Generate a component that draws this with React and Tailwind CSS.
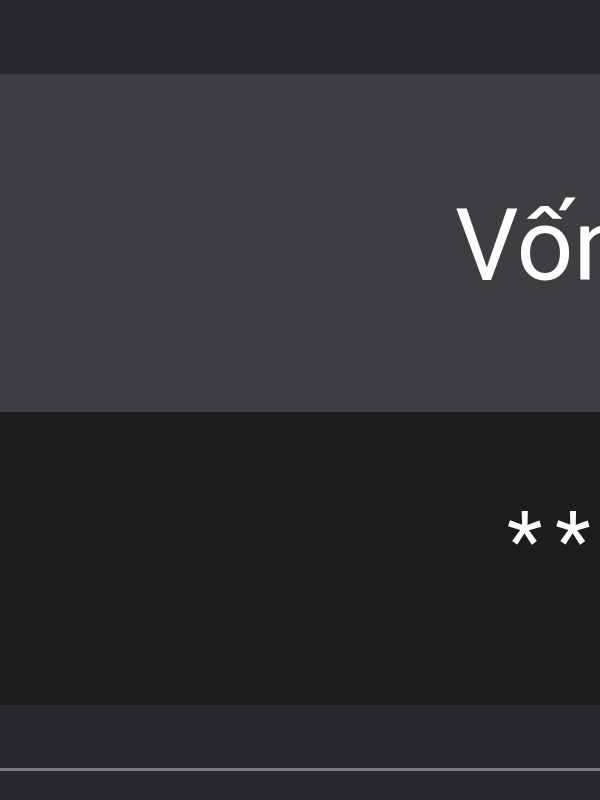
export default function App() {
  return (
    <div className="w-[600px] h-[800px] overflow-hidden bg-[#29282e] flex flex-col" style={{ fontFamily: 'Roboto, "Noto Sans", sans-serif' }}>
      <div className="h-[74px] shrink-0 bg-[#29282e]" />
      <div className="h-[338px] shrink-0 bg-[#3e3d42] flex items-center pl-[455px] pt-[6px] overflow-hidden">
        <span className="text-[100px] leading-none text-white whitespace-nowrap">Vốn hóa</span>
      </div>
      <div className="h-[293px] shrink-0 bg-[#1c1b1e] flex items-center pl-[507px] pb-[36px] overflow-hidden">
        <span className="text-[82px] leading-none text-white whitespace-nowrap tracking-[13px]">******</span>
      </div>
      <div className="h-[63px] shrink-0 bg-[#29282e]" />
      <div className="h-[3px] shrink-0 bg-[#7a797e]" />
      <div className="flex-1 bg-[#29282e]" />
    </div>
  );
}
